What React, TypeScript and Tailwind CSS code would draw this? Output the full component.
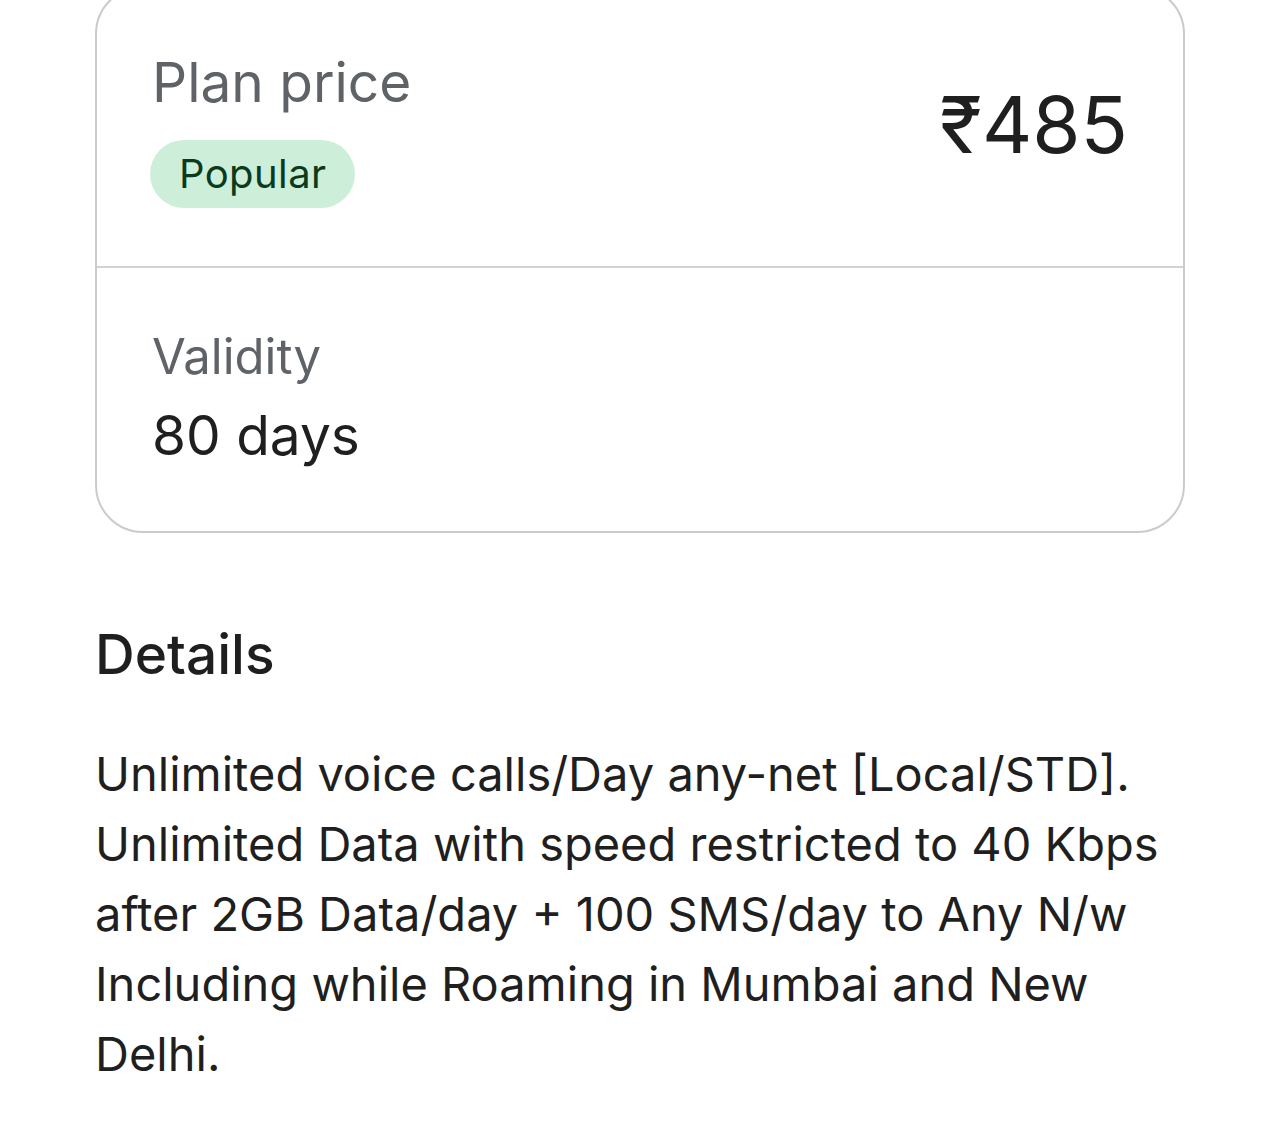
export default function App() {
  return (
    <div className="min-h-screen bg-white overflow-hidden" style={{ fontFamily: "Inter, Roboto, sans-serif" }}>
      <main className="px-[95px]">
        <div className="-mt-[14px] rounded-[48px] border-2 border-[#c9cbcd] bg-white">
          <div className="flex items-start justify-between pl-[55px] pr-[55px] pt-[66px] pb-[58px]">
            <div>
              <h2 className="text-[55px] leading-[56px] text-[#5f6368]">Plan price</h2>
              <span className="mt-[30px] ml-[-2px] inline-flex h-[68px] items-center rounded-full bg-[#cdeed9] px-[29px] text-[40px] tracking-[0.01em] text-[#0b3b1c]">
                Popular
              </span>
            </div>
            <div className="pt-[28px] text-[78px] leading-[86px] text-[#1f1f1f]">₹485</div>
          </div>
          <div className="h-[2px] bg-[#d0d2d4]" />
          <div className="pl-[55px] pt-[61px] pb-[65px]">
            <p className="text-[49px] leading-[56px] text-[#5f6368]">Validity</p>
            <p className="mt-[19px] text-[55px] leading-[62px] text-[#1f1f1f]">80 days</p>
          </div>
        </div>

        <section className="mt-[89px]">
          <h3 className="text-[55px] leading-[64px] font-medium text-[#1f1f1f]">Details</h3>
          <p className="mt-[53px] text-[47px] leading-[70px] text-[#1f1f1f]">
            <span className="block">Unlimited voice calls/Day any-net [Local/STD].</span>
            <span className="block">Unlimited Data with speed restricted to 40 Kbps</span>
            <span className="block">after 2GB Data/day + 100 SMS/day to Any N/w</span>
            <span className="block">Including while Roaming in Mumbai and New</span>
            <span className="block">Delhi.</span>
          </p>
        </section>
      </main>
    </div>
  );
}
